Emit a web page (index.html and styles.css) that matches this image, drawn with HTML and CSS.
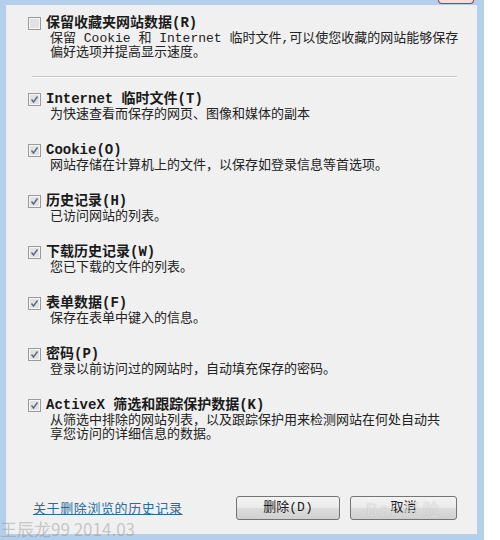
FILE: index.html
```html
<!DOCTYPE html>
<html lang="zh-CN">
<head>
<meta charset="UTF-8">
<meta name="viewport" content="width=device-width, initial-scale=1.0">
<title>删除浏览历史记录</title>
<link rel="stylesheet" href="styles.css">
</head>
<body>

<div class="window">
<div class="close-tab"></div>
<div class="panel">

<div class="option">
<div class="option-title">
<svg class="check" width="13" height="13" viewBox="0 0 13 13"><rect x="0.5" y="0.5" width="12" height="12" fill="#f6f6f6" stroke="#9a9a9a"/><rect x="2" y="2" width="9" height="9" fill="#e2e2e2"/></svg>
<span>保留收藏夹网站数据(R)</span>
</div>
<div class="option-desc">保留 Cookie 和 Internet 临时文件,可以使您收藏的网站能够保存<br>偏好选项并提高显示速度。</div>
</div>

<hr class="divider">

<div class="list">
<div class="option">
<div class="option-title">
<svg class="check" width="13" height="13" viewBox="0 0 13 13"><rect x="0.5" y="0.5" width="12" height="12" fill="#f6f6f6" stroke="#9a9a9a"/><rect x="2" y="2" width="9" height="9" fill="#e2e2e2"/><path d="M3.5 6.5 L5.5 9 L9.5 3.5" fill="none" stroke="#56698a" stroke-width="1.4"/></svg>
<span>Internet 临时文件(T)</span>
</div>
<div class="option-desc">为快速查看而保存的网页、图像和媒体的副本</div>
</div>

<div class="option">
<div class="option-title">
<svg class="check" width="13" height="13" viewBox="0 0 13 13"><rect x="0.5" y="0.5" width="12" height="12" fill="#f6f6f6" stroke="#9a9a9a"/><rect x="2" y="2" width="9" height="9" fill="#e2e2e2"/><path d="M3.5 6.5 L5.5 9 L9.5 3.5" fill="none" stroke="#56698a" stroke-width="1.4"/></svg>
<span>Cookie(O)</span>
</div>
<div class="option-desc">网站存储在计算机上的文件，以保存如登录信息等首选项。</div>
</div>

<div class="option">
<div class="option-title">
<svg class="check" width="13" height="13" viewBox="0 0 13 13"><rect x="0.5" y="0.5" width="12" height="12" fill="#f6f6f6" stroke="#9a9a9a"/><rect x="2" y="2" width="9" height="9" fill="#e2e2e2"/><path d="M3.5 6.5 L5.5 9 L9.5 3.5" fill="none" stroke="#56698a" stroke-width="1.4"/></svg>
<span>历史记录(H)</span>
</div>
<div class="option-desc">已访问网站的列表。</div>
</div>

<div class="option">
<div class="option-title">
<svg class="check" width="13" height="13" viewBox="0 0 13 13"><rect x="0.5" y="0.5" width="12" height="12" fill="#f6f6f6" stroke="#9a9a9a"/><rect x="2" y="2" width="9" height="9" fill="#e2e2e2"/><path d="M3.5 6.5 L5.5 9 L9.5 3.5" fill="none" stroke="#56698a" stroke-width="1.4"/></svg>
<span>下载历史记录(W)</span>
</div>
<div class="option-desc">您已下载的文件的列表。</div>
</div>

<div class="option">
<div class="option-title">
<svg class="check" width="13" height="13" viewBox="0 0 13 13"><rect x="0.5" y="0.5" width="12" height="12" fill="#f6f6f6" stroke="#9a9a9a"/><rect x="2" y="2" width="9" height="9" fill="#e2e2e2"/><path d="M3.5 6.5 L5.5 9 L9.5 3.5" fill="none" stroke="#56698a" stroke-width="1.4"/></svg>
<span>表单数据(F)</span>
</div>
<div class="option-desc">保存在表单中键入的信息。</div>
</div>

<div class="option">
<div class="option-title">
<svg class="check" width="13" height="13" viewBox="0 0 13 13"><rect x="0.5" y="0.5" width="12" height="12" fill="#f6f6f6" stroke="#9a9a9a"/><rect x="2" y="2" width="9" height="9" fill="#e2e2e2"/><path d="M3.5 6.5 L5.5 9 L9.5 3.5" fill="none" stroke="#56698a" stroke-width="1.4"/></svg>
<span>密码(P)</span>
</div>
<div class="option-desc">登录以前访问过的网站时，自动填充保存的密码。</div>
</div>

<div class="option">
<div class="option-title">
<svg class="check" width="13" height="13" viewBox="0 0 13 13"><rect x="0.5" y="0.5" width="12" height="12" fill="#f6f6f6" stroke="#9a9a9a"/><rect x="2" y="2" width="9" height="9" fill="#e2e2e2"/><path d="M3.5 6.5 L5.5 9 L9.5 3.5" fill="none" stroke="#56698a" stroke-width="1.4"/></svg>
<span>ActiveX 筛选和跟踪保护数据(K)</span>
</div>
<div class="option-desc">从筛选中排除的网站列表，以及跟踪保护用来检测网站在何处自动共<br>享您访问的详细信息的数据。</div>
</div>
</div>

<div class="footer">
<a href="#" class="help-link">关于删除浏览的历史记录</a>
<div class="buttons">
<button class="btn btn-delete">删除(D)</button>
<button class="btn btn-cancel">取消</button>
</div>
</div>

</div>
<div class="baidu-mark">Bai 经验</div>
<div class="watermark">王辰龙99 2014.03</div>
</div>

</body>
</html>
```

FILE: styles.css
```css
body {
    margin: 0;
    background-color: #fff;
    font-family: "Liberation Mono", "Noto Sans CJK SC", monospace;
    color: #1a1a1a;
}

.window {
    position: relative;
    width: 471px;
    height: 529px;
    border-style: solid;
    border-color: #b3cfec;
    border-width: 5px 7px 6px 6px;
}

.close-tab {
    position: absolute;
    top: -5px;
    left: 432px;
    width: 34px;
    height: 3px;
    background-color: #f3dede;
    border: 1px solid #a8403f;
    border-top: none;
    border-radius: 0 0 4px 4px;
}

.panel {
    height: 100%;
    box-sizing: border-box;
    padding: 10px 20px 14px 22px;
    background-color: #f0f0f0;
    border-left: 1px solid #e4edf7;
    display: flex;
    flex-direction: column;
}

.option-title {
    display: flex;
    align-items: flex-start;
    font-size: 14px;
    line-height: 17px;
    font-weight: bold;
    margin-left: -1px;
}

.check {
    flex: none;
    margin: 2px 5px 0 0;
}

.option-desc {
    padding-left: 21px;
    font-size: 13px;
    line-height: 14px;
    white-space: nowrap;
    color: #222;
}

.divider {
    width: 425px;
    margin: 16px 0 13px 3px;
    border: none;
    border-top: 1px solid #c9c9c9;
    border-bottom: 1px solid #fafafa;
}

.list {
    display: flex;
    flex-direction: column;
    gap: 20px;
}

.footer {
    margin-top: auto;
    display: flex;
    align-items: center;
}

.help-link {
    margin-left: 4px;
    font-family: "Noto Sans CJK SC", sans-serif;
    font-size: 13px;
    line-height: 14px;
    letter-spacing: 0.6px;
    color: #2a6c96;
    text-decoration: underline;
}

.buttons {
    margin-left: auto;
    display: flex;
    gap: 10px;
}

.btn {
    height: 24px;
    padding: 0;
    border: 1px solid #747474;
    border-radius: 3px;
    background: linear-gradient(#f3f3f3 0%, #ebebeb 48%, #dcdcdc 52%, #d0d0d0 100%);
    font-family: "Liberation Mono", "Noto Sans CJK SC", monospace;
    font-size: 13px;
    line-height: 16px;
    color: #1a1a1a;
}

.btn-delete {
    width: 104px;
}

.btn-cancel {
    width: 107px;
}

.baidu-mark {
    position: absolute;
    left: 360px;
    top: 494px;
    font-family: "Noto Sans CJK SC", sans-serif;
    font-size: 17px;
    line-height: 20px;
    letter-spacing: 2px;
    color: rgba(255, 255, 255, 0.55);
    text-shadow: 0 0 1px rgba(140, 140, 140, 0.5);
}

.watermark {
    position: absolute;
    left: -6px;
    top: 515px;
    font-family: "Noto Sans CJK SC", sans-serif;
    font-size: 17px;
    line-height: 18px;
    color: rgba(130, 130, 130, 0.4);
}
```
